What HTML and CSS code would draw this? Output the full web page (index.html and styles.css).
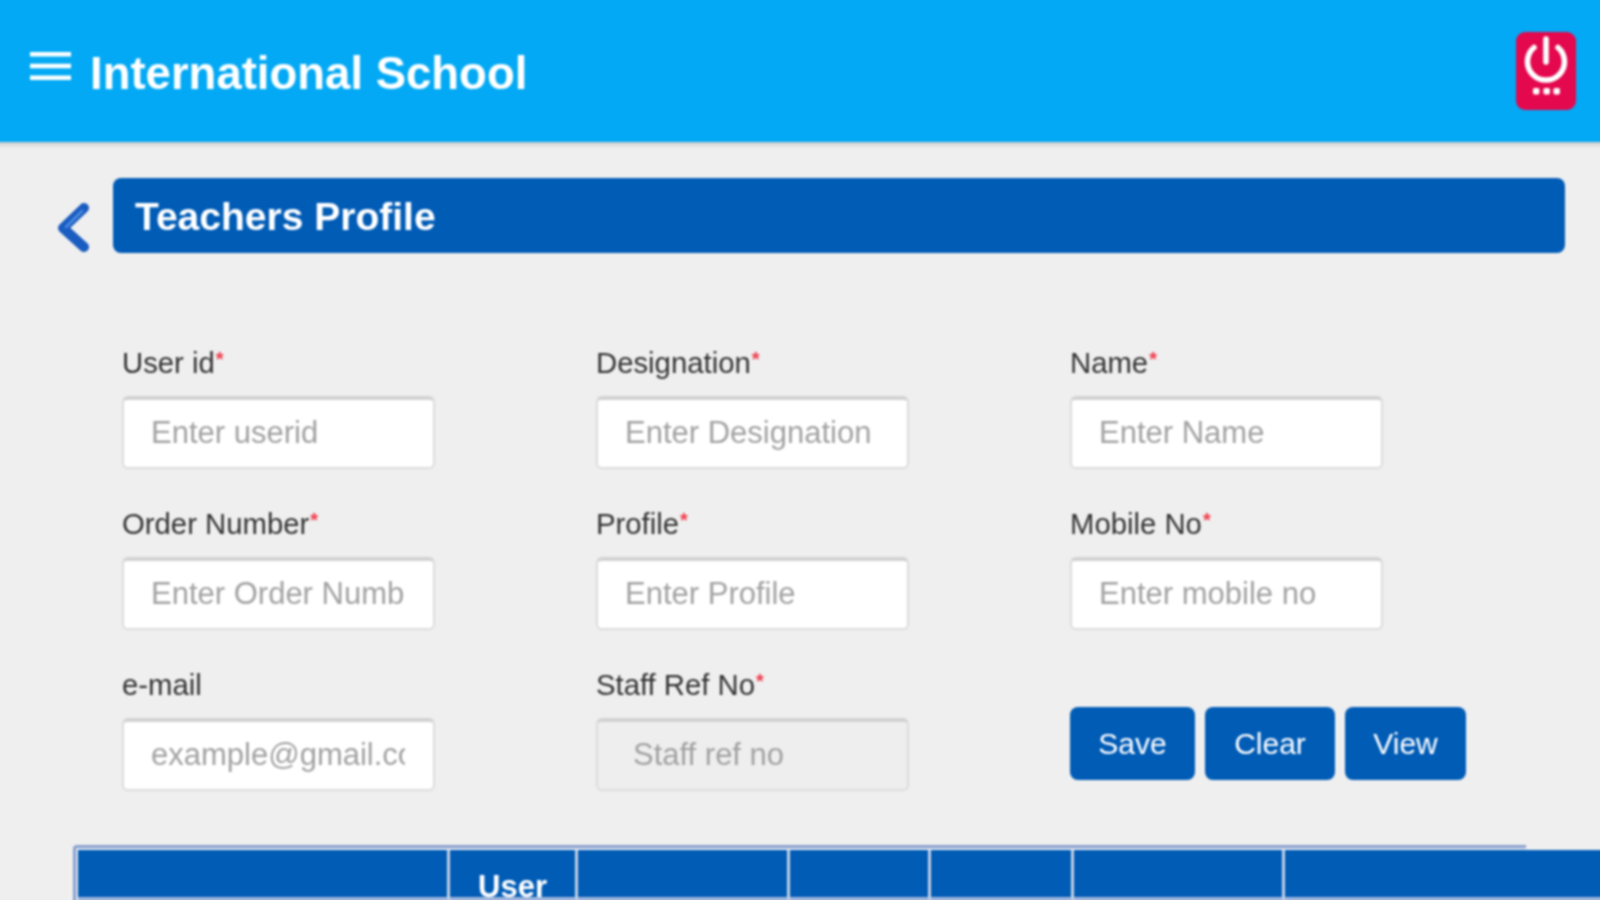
FILE: index.html
```html
<!DOCTYPE html>
<html lang="en">
<head>
<meta charset="utf-8">
<title>International School</title>
<link rel="stylesheet" href="styles.css">
</head>
<body>
<div class="app">
  <header class="topbar">
    <div class="brand">
      <svg class="menu-icon" viewBox="0 0 41 28" aria-hidden="true"><path d="M0 2.2h41M0 14h41M0 25.8h41" /></svg>
      <h1 class="app-title">International School</h1>
    </div>
    <button class="power" type="button" aria-label="Power">
      <svg viewBox="0 0 60 78" aria-hidden="true">
        <path class="power-ring" d="M18 15.5a18.5 18.5 0 1 0 24 0" />
        <path class="power-ring" d="M30 7v23" />
        <rect class="power-dot" x="17" y="56" width="6.4" height="6.4" rx="1.6" />
        <rect class="power-dot" x="27.5" y="56" width="6.4" height="6.4" rx="1.6" />
        <rect class="power-dot" x="37.5" y="56" width="6.4" height="6.4" rx="1.6" />
      </svg>
    </button>
  </header>

  <main class="content">
    <div class="page-head">
      <svg class="back" viewBox="0 0 33 49" aria-hidden="true">
        <path class="back-main" d="M27 5 6 25l21 19" />
        <path class="back-shine" d="M25 8 9 24" />
      </svg>
      <h2 class="page-title">Teachers Profile</h2>
    </div>

    <form class="form-grid">
      <div class="field"><label>User id<sup>*</sup></label><input placeholder="Enter userid"></div>
      <div class="field"><label>Designation<sup>*</sup></label><input placeholder="Enter Designation"></div>
      <div class="field"><label>Name<sup>*</sup></label><input placeholder="Enter Name"></div>
      <div class="field"><label>Order Number<sup>*</sup></label><input placeholder="Enter Order Number"></div>
      <div class="field"><label>Profile<sup>*</sup></label><input placeholder="Enter Profile"></div>
      <div class="field"><label>Mobile No<sup>*</sup></label><input placeholder="Enter mobile no"></div>
      <div class="field"><label>e-mail</label><input placeholder="example@gmail.com"></div>
      <div class="field"><label>Staff Ref No<sup>*</sup></label><input class="readonly" placeholder="Staff ref no" disabled></div>
      <div class="actions">
        <button type="button" class="btn btn-save">Save</button>
        <button type="button" class="btn btn-clear">Clear</button>
        <button type="button" class="btn btn-view">View</button>
      </div>
    </form>

    <div class="table-wrap">
      <table class="data-table">
        <colgroup>
          <col class="c1"><col class="c2"><col class="c3"><col class="c4"><col class="c5"><col class="c6"><col class="c7">
        </colgroup>
        <thead>
          <tr><th></th><th>User</th><th></th><th></th><th></th><th></th><th></th></tr>
        </thead>
      </table>
    </div>
  </main>
</div>
</body>
</html>
```
FILE: styles.css
```css
* { box-sizing: border-box; }
html, body { margin: 0; height: 100%; overflow: hidden; }
body { background: #efefef; font-family: "Liberation Sans", Arial, sans-serif; color: #333; }
.app { width: 1600px; height: 900px; filter: blur(0.9px); }

.topbar {
  height: 150px; margin: -8px -8px 0; background: #03a9f4; box-shadow: 0 2px 5px rgba(0,0,0,.2);
  display: flex; justify-content: space-between; align-items: flex-start;
  padding: 40px 32px 0 38px;
}
.brand { display: flex; align-items: flex-start; gap: 19px; }
.menu-icon { width: 41px; height: 28px; margin-top: 20px; }
.menu-icon path { stroke: #fff; stroke-width: 4.4; fill: none; }
.app-title { margin: 15px 0 0; font-size: 45.5px; line-height: 54px; font-weight: 700; color: #fff; }
.power { width: 60px; height: 78px; padding: 0; border: 0; border-radius: 9px; background: #e4084e; display: block; }
.power svg { width: 60px; height: 78px; display: block; }
.power-ring { fill: none; stroke: #fff; stroke-width: 5.5; stroke-linecap: round; }
.power-dot { fill: #fff; }

.content { padding: 36px 0 0 73px; }
.page-head { display: flex; align-items: flex-start; padding-right: 35px; }
.back { width: 33px; height: 49px; margin: 25px 23px 0 -16px; flex: none; }
.back-main { fill: none; stroke: #1a5cc0; stroke-width: 10; stroke-linecap: round; stroke-linejoin: round; }
.back-shine { fill: none; stroke: #4a8be0; stroke-width: 2.5; stroke-linecap: round; }
.page-title {
  flex: 1; height: 75px; margin: 0; padding-left: 22px; border-radius: 8px;
  background: #015cb6; color: #fff; font-size: 39px; line-height: 77px; font-weight: 700;
}

.form-grid { display: grid; grid-template-columns: repeat(3, 313px); column-gap: 161px; row-gap: 0; margin: 90px 0 0 49px; }
.field { height: 161px; display: flex; flex-direction: column; }
.field label { height: 53px; font-size: 29.3px; line-height: 40px; color: #333; }
.field sup { color: #f03a4a; font-size: 20px; font-weight: 700; line-height: 0; vertical-align: 7px; margin-left: 1px; }
.field input {
  width: 313px; height: 73px; padding: 0 28px 2px 27px; border: 2px solid #dcdcdc; border-top: 4px solid #d2d2d2; border-radius: 6px;
  background: #fff; font: 31px "Liberation Sans", Arial, sans-serif; color: #555;
}
.field input::placeholder { color: #a2a2a2; opacity: 1; }
.field input.readonly { background: #eee; padding-left: 35px; }

.actions { display: flex; gap: 10px; padding-top: 42px; align-items: flex-start; }
.btn { flex: none; height: 73px; border: 0; border-radius: 8px; background: #015cb6; color: #fff; padding: 0; font: 30px "Liberation Sans", Arial, sans-serif; }
.btn-save { width: 125px; }
.btn-clear { width: 130px; }
.btn-view { width: 121px; }

.table-wrap { margin: 19px 0 0; height: 64px; width: 1453px; border-top: 3px solid #8aa0cf; border-left: 3px solid #8aa0cf; border-top-left-radius: 4px; background: #dfe5f0; padding: 2px 0 0 2px; }
.data-table { border-collapse: separate; border-spacing: 0; table-layout: fixed; width: 1542px; }
.c1 { width: 372px; } .c2 { width: 128px; } .c3 { width: 212px; } .c4 { width: 141px; } .c5 { width: 143px; } .c6 { width: 211px; } .c7 { width: 335px; }
.data-table th { background: #015cb6; color: #fff; border-right: 3px solid #c3d0e6; border-bottom: 10px solid #9fb6dc; font-size: 31px; vertical-align: top; padding: 27px 0 0; line-height: 20px; }
.data-table th:last-child { border-right: 0; }
```
